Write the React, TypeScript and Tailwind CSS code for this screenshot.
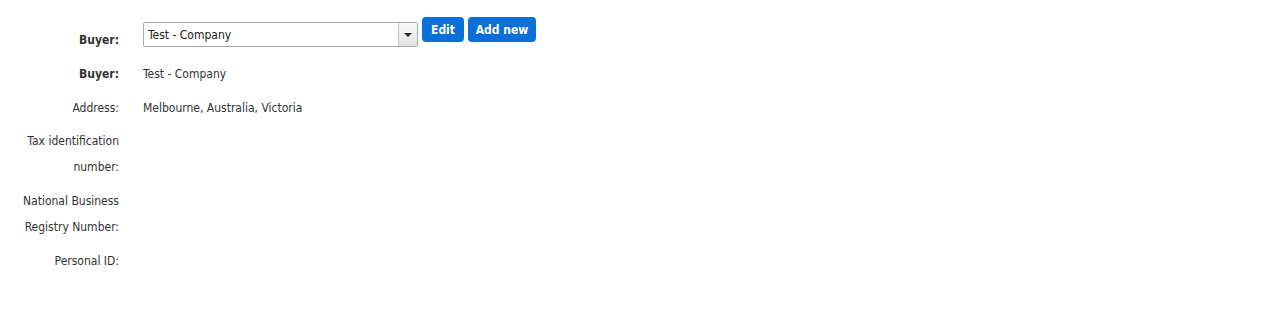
import { useState } from "react";

const font = { fontFamily: '"DejaVu Sans Condensed", Tahoma, "DejaVu Sans", sans-serif' };

export default function App() {
  const [buyer] = useState("Test - Company");

  return (
    <div className="min-h-screen bg-white text-[12px] text-[#333]" style={font}>
      <div className="pl-[19px] pt-[17px]">
        {/* Buyer select row */}
        <div className="flex items-start h-[40px]">
          <div className="w-[100px] text-right font-bold leading-[26px] mt-[10px]">Buyer:</div>
          <div className="ml-[24px] mt-[5px] flex h-[25px] w-[275px] rounded-[2px] border border-[#a9a9a9] bg-white">
            <div className="flex-1 pl-[4px] pt-[1px] leading-[23px] text-[#222]">{buyer}</div>
            <div className="flex w-[19px] items-center justify-center border-l border-[#c4c4c4] bg-gradient-to-b from-[#fafafa] to-[#e2e2e2]">
              <span className="block h-0 w-0 border-x-[4px] border-t-[4px] border-x-transparent border-t-[#222]" />
            </div>
          </div>
          <button className="ml-[4px] h-[25px] w-[42px] rounded-[4px] bg-[#0a6fd6] font-bold text-white">Edit</button>
          <button className="ml-[4px] h-[25px] w-[68px] rounded-[4px] bg-[#0a6fd6] font-bold text-white">Add new</button>
        </div>

        <div className="grid grid-cols-[100px_1fr] gap-x-[24px] leading-[26px]">
          <div className="py-[4px] text-right font-bold">Buyer:</div>
          <div className="py-[4px]">Test - Company</div>

          <div className="pt-[4px] pb-[3px] text-right">Address:</div>
          <div className="pt-[4px] pb-[3px]">Melbourne, Australia, Victoria</div>

          <div className="py-[4px] text-right">Tax identification number:</div>
          <div className="py-[4px]"></div>

          <div className="py-[4px] text-right">National Business Registry Number:</div>
          <div className="py-[4px]"></div>

          <div className="py-[4px] text-right">Personal ID:</div>
          <div className="py-[4px]"></div>
        </div>
      </div>
    </div>
  );
}
